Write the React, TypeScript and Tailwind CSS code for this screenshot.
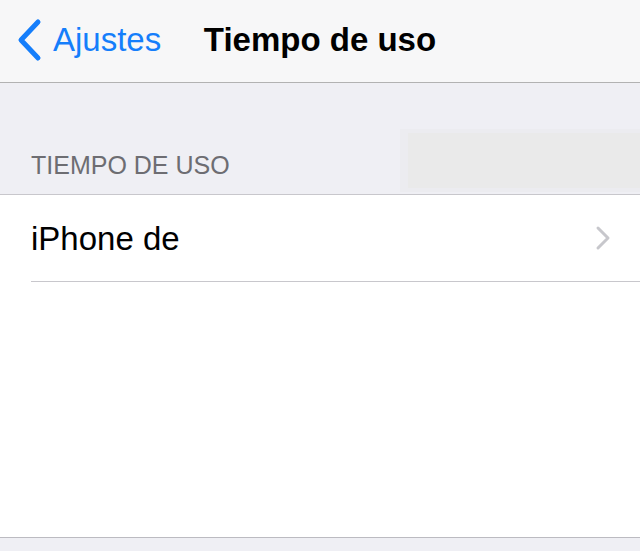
import React from "react";

const font = { fontFamily: '"Liberation Sans", Arial, sans-serif' };

function BackChevron() {
  return (
    <svg width="26" height="44" viewBox="0 0 26 44" fill="none">
      <polyline
        points="22,4 5,22 22,40"
        stroke="#157efb"
        strokeWidth="5"
        strokeLinecap="round"
        strokeLinejoin="round"
      />
    </svg>
  );
}

function RowChevron() {
  return (
    <svg width="16" height="26" viewBox="0 0 16 26" fill="none">
      <polyline
        points="3,3 13,13 3,23"
        stroke="#c7c7cc"
        strokeWidth="3"
        strokeLinecap="round"
        strokeLinejoin="round"
      />
    </svg>
  );
}

export default function App() {
  return (
    <div className="h-[551px] w-[640px] flex flex-col bg-[#efeff4] overflow-hidden" style={font}>
      {/* navigation bar */}
      <header className="h-[83px] shrink-0 grid grid-cols-[1fr_auto_1fr] items-center bg-[#f7f7f8] border-b border-[#b2b2b2] pb-[3px]">
        <button className="flex items-center pl-[16px] text-[#157efb] text-[33px] leading-none">
          <BackChevron />
          <span className="ml-[11px]">Ajustes</span>
        </button>
        <h1 className="text-[33px] leading-none font-bold text-black">Tiempo de uso</h1>
        <div />
      </header>

      {/* section header */}
      <div className="h-[112px] shrink-0 flex items-end justify-between border-b border-[#c8c7cc]">
        <span className="ml-[31px] mb-[16px] text-[25px] leading-none text-[#6d6d72]">TIEMPO DE USO</span>
        <div className="mb-[2px] pl-[8px] pt-[4px] pb-[4px] bg-[#ececf0]">
          <div className="w-[232px] h-[55px] bg-[#eaeaea]" />
        </div>
      </div>

      {/* list */}
      <div className="bg-white shrink-0 h-[343px] border-b border-[#bcbbc1]">
        <div className="h-[87px] ml-[31px] pr-[29px] flex items-center justify-between border-b border-[#c8c7cc]">
          <span className="text-[33px] leading-none text-black">iPhone de</span>
          <RowChevron />
        </div>
      </div>

      <div className="flex-1" />
    </div>
  );
}
